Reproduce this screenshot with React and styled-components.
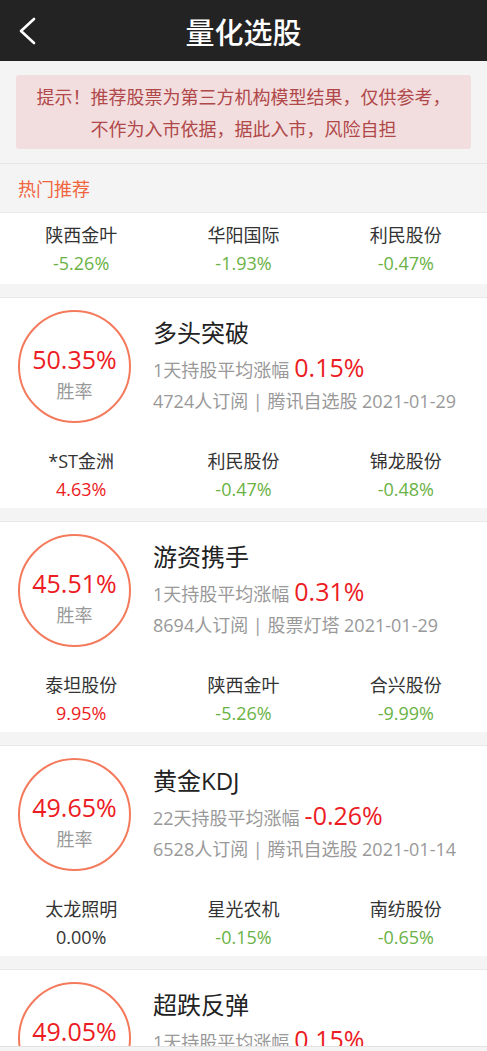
import React from "react";
import styled, { createGlobalStyle } from "styled-components";

const Global = createGlobalStyle`
  html, body { margin: 0; padding: 0; background: #f4f4f4; }
  body { font-family: "Open Sans", "Noto Sans CJK SC", sans-serif; color: #333; }
  * { box-sizing: border-box; }
`;

const Page = styled.div`
  width: 100%;
  min-height: 1051px;
  background: #f4f4f4;
  overflow: hidden;
`;

const Header = styled.header`
  height: 61px;
  background: #232323;
  display: flex;
  align-items: center;
  justify-content: center;
  position: relative;
`;

const BackBtn = styled.button`
  position: absolute;
  left: 10px;
  top: 12px;
  width: 36px;
  height: 38px;
  border: 0;
  background: transparent;
  padding: 0;
  display: flex;
  align-items: center;
  justify-content: center;
`;

const Title = styled.h1`
  margin: 0;
  color: #fff;
  font-size: 29px;
  font-weight: 500;
  font-family: "Noto Sans CJK SC", sans-serif;
  letter-spacing: 0;
`;

const NoticeWrap = styled.div`
  padding: 14px 16px;
  border-bottom: 1px solid #e6e6e6;
`;

const Notice = styled.div`
  background: #f2dede;
  color: #b0484a;
  border-radius: 3px;
  font-size: 18px;
  line-height: 32px;
  text-align: center;
  padding: 5px 10px;
  font-family: "Noto Sans CJK SC", sans-serif;
`;

const SectionTitle = styled.div`
  height: 49px;
  display: flex;
  align-items: center;
  padding-left: 18px;
  color: #f0643e;
  font-size: 18px;
  font-family: "Noto Sans CJK SC", sans-serif;
  border-bottom: 1px solid #ebebeb;
`;

const StockRow = styled.div`
  display: grid;
  grid-template-columns: repeat(3, 1fr);
  background: #fff;
  height: ${(p) => p.$h || 71}px;
  padding-top: ${(p) => p.$pt || 7}px;
`;

const StockCell = styled.div`
  display: flex;
  flex-direction: column;
  align-items: center;
`;

const StockName = styled.div`
  font-size: 18px;
  line-height: 28px;
  color: #333;
`;

const Pct = styled.div`
  font-size: 18px;
  line-height: 28px;
  color: ${(p) => (p.$v > 0 ? "#ec1c24" : p.$v < 0 ? "#6ab245" : "#333")};
`;

const HotBlock = styled.div`
  margin-bottom: 13px;
`;

const Card = styled.section`
  background: #fff;
  border-top: 1px solid #e8e8e8;
  margin-bottom: 13px;
`;

const CardTop = styled.div`
  display: flex;
  padding: 12px 0 0 18px;
  height: 141px;
`;

const Circle = styled.div`
  width: 113px;
  height: 113px;
  border: 2px solid #f47a5c;
  border-radius: 50%;
  display: flex;
  flex-direction: column;
  align-items: center;
  padding-top: 31px;
  flex-shrink: 0;
`;

const Rate = styled.div`
  font-size: 25px;
  line-height: 32px;
  color: #ec1c24;
`;

const RateLabel = styled.div`
  font-size: 18px;
  line-height: 32px;
  color: #999;
`;

const Info = styled.div`
  margin-left: 22px;
  padding-top: 5px;
  display: flex;
  flex-direction: column;
`;

const Name = styled.div`
  font-size: 24px;
  line-height: 36px;
  color: #222;
`;

const Gain = styled.div`
  font-size: 18px;
  line-height: 32px;
  color: #999;
  white-space: nowrap;
  span {
    font-size: 25px;
    color: #ec1c24;
    margin-left: 5px;
  }
`;

const Meta = styled.div`
  font-size: 18px;
  line-height: 31px;
  color: #999;
  white-space: nowrap;
`;

const BottomStrip = styled.div`
  position: fixed;
  left: 0;
  right: 0;
  bottom: 0;
  height: 5px;
  background: #f4f4f4;
  border-top: 1px solid #e2e2e2;
`;

const hot = [
  ["陕西金叶", "-5.26%", -1],
  ["华阳国际", "-1.93%", -1],
  ["利民股份", "-0.47%", -1],
];

const cards = [
  {
    rate: "50.35%",
    name: "多头突破",
    days: "1天持股平均涨幅",
    gain: "0.15%",
    meta: "4724人订阅 | 腾讯自选股 2021-01-29",
    stocks: [
      ["*ST金洲", "4.63%", 1],
      ["利民股份", "-0.47%", -1],
      ["锦龙股份", "-0.48%", -1],
    ],
  },
  {
    rate: "45.51%",
    name: "游资携手",
    days: "1天持股平均涨幅",
    gain: "0.31%",
    meta: "8694人订阅 | 股票灯塔 2021-01-29",
    stocks: [
      ["泰坦股份", "9.95%", 1],
      ["陕西金叶", "-5.26%", -1],
      ["合兴股份", "-9.99%", -1],
    ],
  },
  {
    rate: "49.65%",
    name: "黄金KDJ",
    days: "22天持股平均涨幅",
    gain: "-0.26%",
    meta: "6528人订阅 | 腾讯自选股 2021-01-14",
    stocks: [
      ["太龙照明", "0.00%", 0],
      ["星光农机", "-0.15%", -1],
      ["南纺股份", "-0.65%", -1],
    ],
  },
  {
    rate: "49.05%",
    name: "超跌反弹",
    days: "1天持股平均涨幅",
    gain: "0.15%",
    meta: "3980人订阅 | 腾讯自选股 2021-01-29",
    stocks: [
      ["太龙照明", "0.00%", 0],
      ["星光农机", "-0.15%", -1],
      ["南纺股份", "-0.65%", -1],
    ],
  },
];

function Stocks({ list, pt, h }) {
  return (
    <StockRow $pt={pt} $h={h}>
      {list.map(([n, p, v]) => (
        <StockCell key={n}>
          <StockName>{n}</StockName>
          <Pct $v={v}>{p}</Pct>
        </StockCell>
      ))}
    </StockRow>
  );
}

export default function App() {
  return (
    <Page>
      <Global />
      <Header>
        <BackBtn aria-label="返回">
          <svg width="20" height="30" viewBox="0 0 20 30">
            <polyline
              points="16,3 3,15 16,27"
              fill="none"
              stroke="#fff"
              strokeWidth="2.6"
              strokeLinecap="round"
              strokeLinejoin="round"
            />
          </svg>
        </BackBtn>
        <Title>量化选股</Title>
      </Header>
      <NoticeWrap>
        <Notice>
          提示！推荐股票为第三方机构模型结果，仅供参考，
          <br />
          不作为入市依据，据此入市，风险自担
        </Notice>
      </NoticeWrap>
      <HotBlock>
        <SectionTitle>热门推荐</SectionTitle>
        <Stocks list={hot} pt={8} h={71} />
      </HotBlock>
      {cards.map((c) => (
        <Card key={c.name}>
          <CardTop>
            <Circle>
              <Rate>{c.rate}</Rate>
              <RateLabel>胜率</RateLabel>
            </Circle>
            <Info>
              <Name>{c.name}</Name>
              <Gain>
                {c.days}
                <span>{c.gain}</span>
              </Gain>
              <Meta>{c.meta}</Meta>
            </Info>
          </CardTop>
          <Stocks list={c.stocks} pt={8} h={69} />
        </Card>
      ))}
      <BottomStrip />
    </Page>
  );
}
